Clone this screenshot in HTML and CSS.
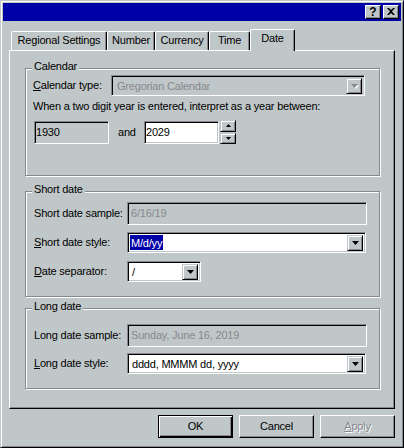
FILE: index.html
```html
<!DOCTYPE html>
<html>
<head>
<meta charset="utf-8">
<title>Regional Settings Properties</title>
<link rel="stylesheet" href="styles.css">
</head>
<body>
<div class="window">
  <div class="titlebar">
    <div class="tb-btn help">?</div>
    <div class="tb-btn close">
      <svg width="8" height="7" viewBox="0 0 8 7"><path d="M0 0h2l2 2 2-2h2L5 3.5 8 7H6L4 5 2 7H0l3-3.5z" fill="#000"/></svg>
    </div>
  </div>

  <div class="tabs">
    <div class="tab t-regional">Regional Settings</div>
    <div class="tab t-number">Number</div>
    <div class="tab t-currency">Currency</div>
    <div class="tab t-time">Time</div>
    <div class="tab t-date active">Date</div>
  </div>

  <div class="panel">
    <div class="group g-calendar">
      <div class="glabel">Calendar</div>
      <div class="row r-caltype">
        <div class="lbl l-cal"><u>C</u>alendar type:</div>
        <div class="combo disabled w-cal">
          <div class="val">Gregorian Calendar</div>
          <div class="drop"><svg width="7" height="5" viewBox="0 0 7 5"><path d="M1 1h7l-3.5 4z" fill="#fff"/><path d="M0 0h7L3.5 4z" fill="#87888f"/></svg></div>
        </div>
      </div>
      <div class="row r-when">When a two digit year is entered, interpret as a year between:</div>
      <div class="row r-years">
        <div class="edit ro y-from">1930</div>
        <div class="and">and</div>
        <div class="edit y-to">2029</div>
        <div class="spin">
          <div class="spin-btn"><svg width="5" height="3" viewBox="0 0 5 3"><path d="M2.5 0L5 3H0z" fill="#000"/></svg></div>
          <div class="spin-btn"><svg width="5" height="3" viewBox="0 0 5 3"><path d="M0 0h5L2.5 3z" fill="#000"/></svg></div>
        </div>
      </div>
    </div>

    <div class="group g-short">
      <div class="glabel">Short date</div>
      <div class="row r-ssample">
        <div class="lbl">Short date sample:</div>
        <div class="edit ro sample w-wide">6/16/19</div>
      </div>
      <div class="row r-sstyle">
        <div class="lbl"><u>S</u>hort date style:</div>
        <div class="combo w-wide2">
          <div class="val"><span class="sel">M/d/yy</span></div>
          <div class="drop"><svg width="7" height="4" viewBox="0 0 7 4"><path d="M0 0h7L3.5 4z" fill="#000"/></svg></div>
        </div>
      </div>
      <div class="row r-sep">
        <div class="lbl"><u>D</u>ate separator:</div>
        <div class="combo w-sep">
          <div class="val">/</div>
          <div class="drop"><svg width="7" height="4" viewBox="0 0 7 4"><path d="M0 0h7L3.5 4z" fill="#000"/></svg></div>
        </div>
      </div>
    </div>

    <div class="group g-long">
      <div class="glabel">Long date</div>
      <div class="row r-lsample">
        <div class="lbl">Long date sample:</div>
        <div class="edit ro sample w-wide">Sunday, June 16, 2019</div>
      </div>
      <div class="row r-lstyle">
        <div class="lbl"><u>L</u>ong date style:</div>
        <div class="combo w-wide2">
          <div class="val">dddd, MMMM dd, yyyy</div>
          <div class="drop"><svg width="7" height="4" viewBox="0 0 7 4"><path d="M0 0h7L3.5 4z" fill="#000"/></svg></div>
        </div>
      </div>
    </div>
  </div>

  <div class="buttons">
    <div class="btn default">OK</div>
    <div class="btn">Cancel</div>
    <div class="btn disabled"><u>A</u>pply</div>
  </div>
</div>
</body>
</html>
```

FILE: styles.css
```css
* { box-sizing: border-box; }
html, body { margin: 0; padding: 0; }
body {
  width: 404px;
  height: 448px;
  overflow: hidden;
  background: #c0c7c8;
  font-family: "Liberation Sans", Arial, sans-serif;
  font-size: 11px;
  line-height: 13px;
  letter-spacing: -0.2px;
  color: #000;
}
u { text-decoration: underline; text-underline-offset: 1px; }

.window {
  width: 404px;
  height: 448px;
  border: 1px solid;
  border-color: #c0c7c8 #000 #000 #c0c7c8;
  box-shadow: inset 1px 1px #fff, inset -1px -1px #87888f;
  padding: 2px;
  display: flex;
  flex-direction: column;
}

/* title bar */
.titlebar {
  height: 18px;
  background: #0000a8;
  display: flex;
  justify-content: flex-end;
  gap: 2px;
  padding: 2px 2px 0 0;
}
.tb-btn {
  width: 16px;
  height: 14px;
  background: #c0c7c8;
  border: 1px solid;
  border-color: #fff #000 #000 #fff;
  box-shadow: inset -1px -1px #87888f;
  display: flex;
  align-items: center;
  justify-content: center;
}
.help {
  font-weight: bold;
  font-size: 12px;
  line-height: 12px;
  letter-spacing: 0;
  padding-bottom: 1px;
}
.close svg { display: block; margin-bottom: 1px; }

/* tabs */
.tabs {
  margin-top: 8px;
  height: 21px;
  padding-left: 8px;
  display: flex;
  align-items: flex-end;
}
.tab {
  height: 19px;
  padding-top: 2px;
  text-align: center;
  white-space: nowrap;
  border-top: 1px solid #fff;
  border-left: 1px solid #fff;
  border-right: 1px solid #000;
  border-radius: 2px 2px 0 0;
  box-shadow: inset -1px 0 #87888f;
  background: #c0c7c8;
}
.t-regional { width: 96px; }
.t-number { width: 48px; }
.t-currency { width: 54px; }
.t-time { width: 41px; }
.t-date { width: 45px; }
.tab.active {
  height: 22px;
  margin-bottom: -1px;
  position: relative;
  z-index: 1;
}

/* panel */
.panel {
  margin-left: 6px;
  width: 386px;
  height: 359px;
  border: 1px solid;
  border-color: #fff #000 #000 #fff;
  box-shadow: inset -1px -1px #87888f;
  padding: 17px 0 0 15px;
  display: flex;
  flex-direction: column;
}

.group {
  width: 355px;
  border: 1px solid #87888f;
  box-shadow: 1px 1px #fff, inset 1px 1px #fff;
  display: flex;
  flex-direction: column;
  align-items: flex-start;
  padding-left: 8px;
}
.g-calendar { height: 108px; padding-left: 7px; }
.g-short { height: 106px; margin-top: 15px; }
.g-long { height: 81px; margin-top: 11px; }

.glabel {
  margin-top: -9px;
  margin-left: -2px;
  padding: 0 2px;
  background: #c0c7c8;
  line-height: 13px;
}
.g-calendar .glabel { margin-left: -1px; }

.row {
  display: flex;
  align-items: center;
  white-space: nowrap;
}
.lbl { width: 93px; }
.l-cal { width: 78px; }

.r-caltype { margin-top: 2px; }
.r-when { margin-top: 4px; }
.r-years { margin-top: 7px; }
.r-ssample { margin-top: 6px; }
.r-sstyle { margin-top: 7px; }
.r-sep { margin-top: 8px; }
.r-lsample { margin-top: 11px; }
.r-lstyle { margin-top: 6px; }

/* sunken boxes */
.edit, .combo {
  border: 1px solid;
  border-color: #87888f #fff #fff #87888f;
  box-shadow: inset 1px 1px #000, inset -1px -1px #c0c7c8;
  background: #fff;
}
.edit {
  height: 23px;
  display: flex;
  align-items: center;
  padding-left: 2px;
}
.edit.ro { background: #c0c7c8; }
.edit.sample { color: #87888f; padding-left: 3px; }
.w-wide { width: 240px; }
.y-from { width: 75px; margin-left: 1px; padding-left: 1px; }
.y-to { width: 75px; padding-left: 1px; }
.and { width: 35px; padding-left: 9px; }

.spin {
  width: 16px;
  height: 24px;
  margin-left: 1px;
  display: flex;
  flex-direction: column;
  gap: 1px;
}
.spin-btn {
  flex: 1;
  background: #c0c7c8;
  border: 1px solid;
  border-color: #c0c7c8 #000 #000 #c0c7c8;
  box-shadow: inset 1px 1px #fff, inset -1px -1px #87888f;
  display: flex;
  align-items: center;
  justify-content: center;
}
.spin-btn svg { display: block; }

.combo {
  height: 21px;
  display: flex;
  align-items: stretch;
  padding: 2px;
}
.combo .val {
  flex: 1;
  line-height: 16px;
  padding-left: 2px;
  overflow: hidden;
}
.combo.disabled { background: #c0c7c8; }
.combo.disabled .val { color: #87888f; padding-left: 3px; }
.w-cal { width: 254px; }
.w-wide2 { width: 239px; }
.w-sep { width: 74px; }
.combo .val .sel {
  display: inline-block;
  background: #0000a8;
  color: #fff;
  height: 16px;
  margin-left: -2px;
  padding: 0 1px;
}
.drop {
  width: 16px;
  height: 16px;
  background: #c0c7c8;
  border: 1px solid;
  border-color: #c0c7c8 #000 #000 #c0c7c8;
  box-shadow: inset 1px 1px #fff, inset -1px -1px #87888f;
  display: flex;
  align-items: center;
  justify-content: center;
}
.drop svg { display: block; }

/* bottom buttons */
.buttons {
  margin-top: 6px;
  display: flex;
  justify-content: flex-end;
  gap: 6px;
  padding-right: 6px;
}
.btn {
  width: 75px;
  height: 23px;
  border: 1px solid;
  border-color: #fff #000 #000 #fff;
  box-shadow: inset -1px -1px #87888f;
  display: flex;
  align-items: center;
  justify-content: center;
}
.btn.default {
  border-color: #000;
  box-shadow: inset 1px 1px #fff, inset -1px -1px #000, inset -2px -2px #87888f;
}
.btn.disabled {
  color: #87888f;
  text-shadow: 1px 1px #fff;
}
```
